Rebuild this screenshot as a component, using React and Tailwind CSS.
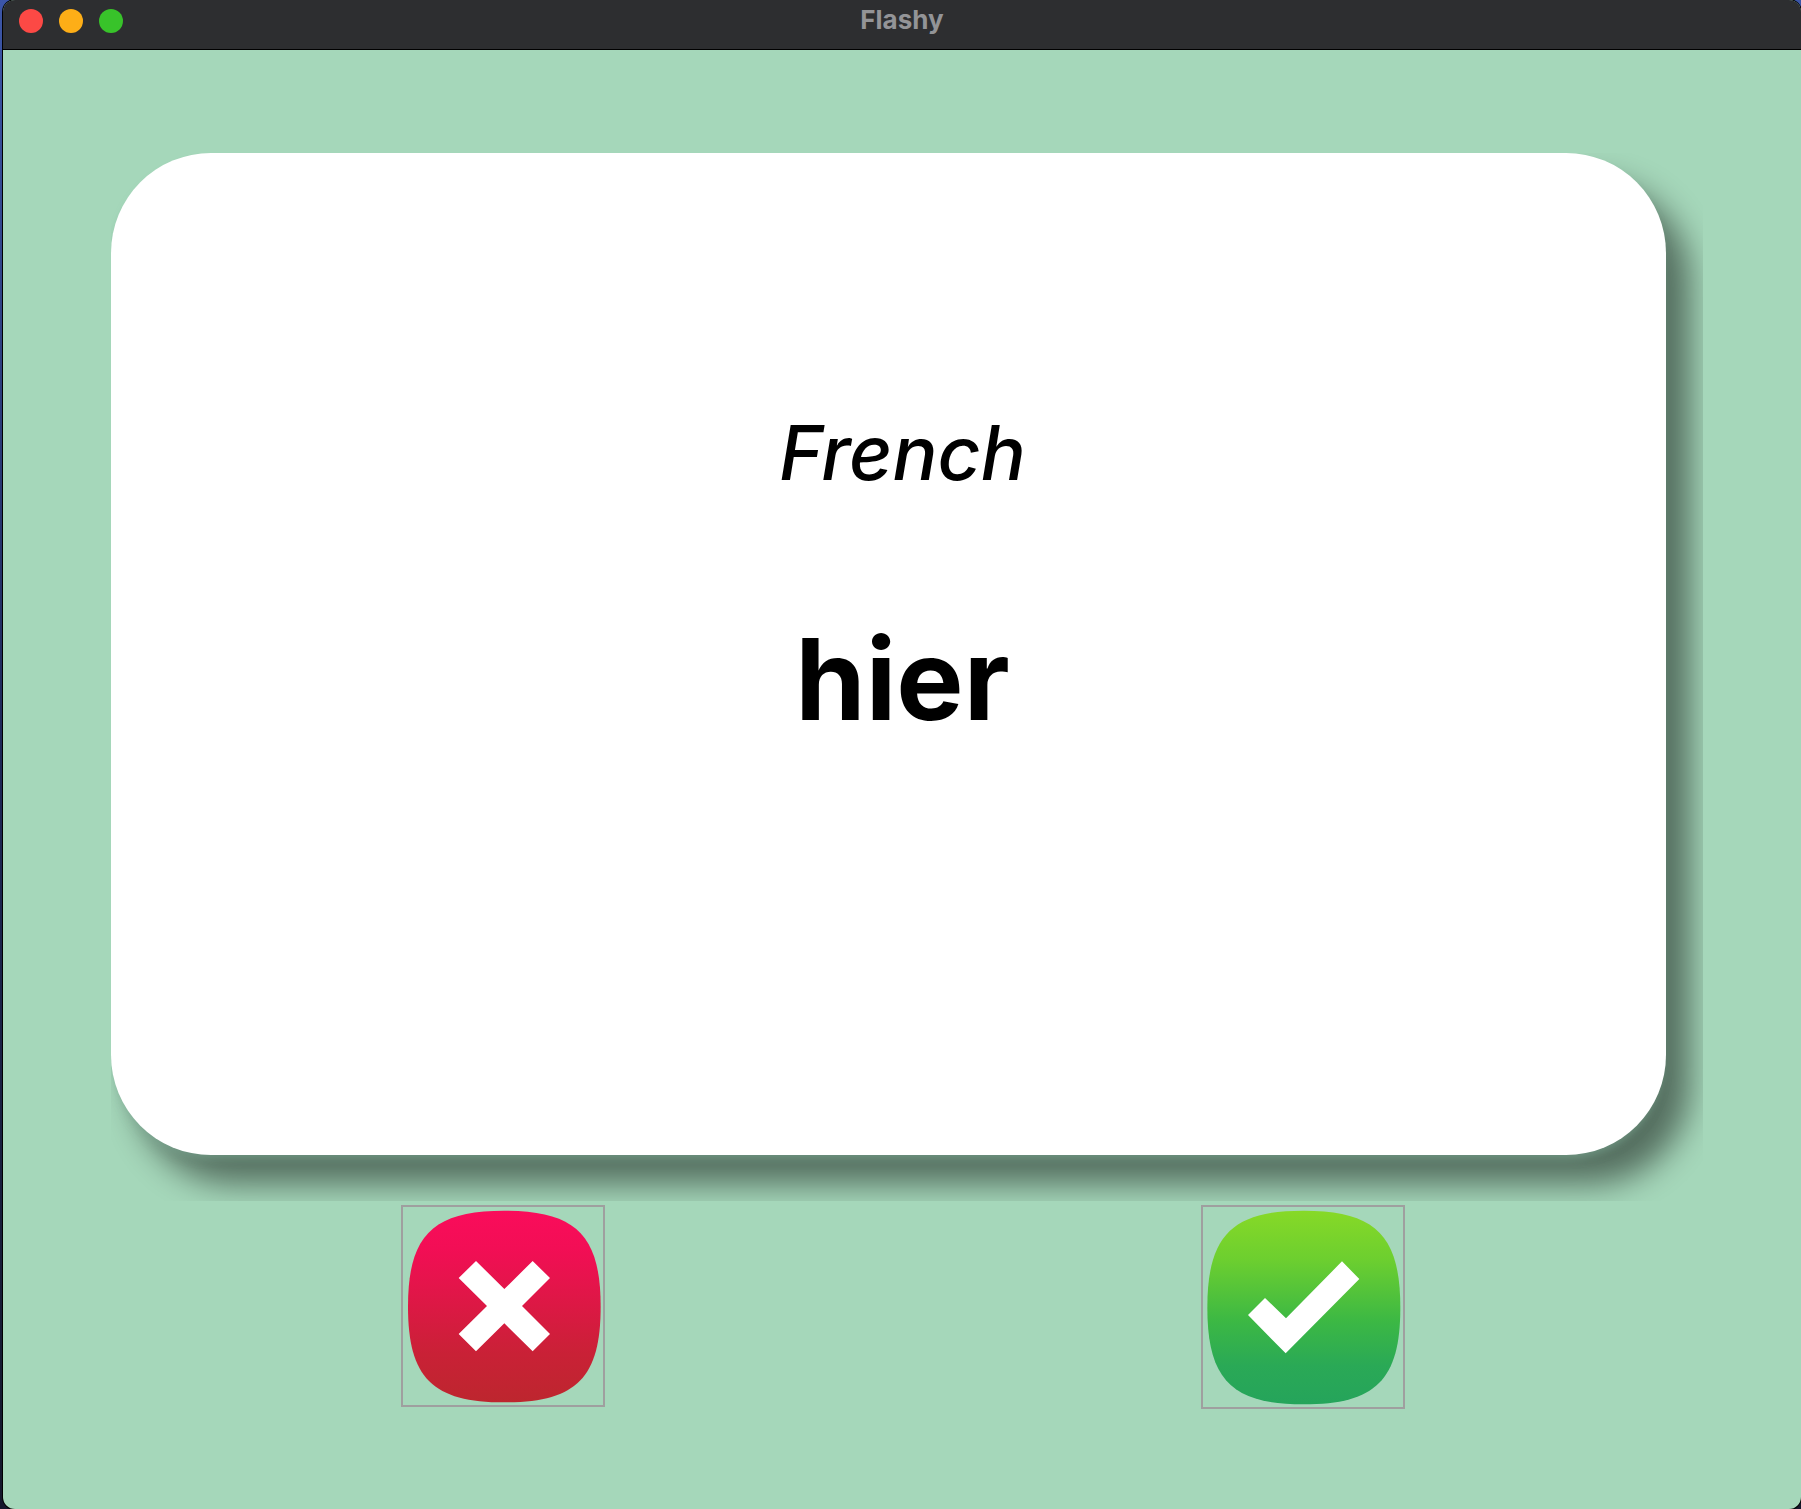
import React from "react";

function TitleBar() {
  return (
    <header className="grid h-[50px] grid-cols-3 items-center border-b border-black bg-[#2d2e30] px-4 pb-2">
      <div className="flex gap-4">
        <button aria-label="Close" className="size-6 rounded-full bg-[#fc4945]" />
        <button aria-label="Minimize" className="size-6 rounded-full bg-[#fdae17]" />
        <button aria-label="Zoom" className="size-6 rounded-full bg-[#38c32a]" />
      </div>
      <h1 className="pb-0.5 text-center text-[26px] leading-8 font-bold text-[#939497]">Flashy</h1>
    </header>
  );
}

function WrongIcon() {
  return (
    <svg viewBox="39 36 600 594" className="h-[198px] w-[200px]" aria-hidden="true">
      <defs>
        <linearGradient id="red" x1="0" y1="0" x2="0" y2="1">
          <stop offset="0" stopColor="#fa0c5b" />
          <stop offset="0.2" stopColor="#f20e55" />
          <stop offset="0.75" stopColor="#c92136" />
          <stop offset="1" stopColor="#bd262e" />
        </linearGradient>
      </defs>
      <path
        d="M343 47C558 47 632 121 632 335C632 549 558 622 343 622C128 622 54 549 54 335C54 121 128 47 343 47Z"
        fill="url(#red)"
      />
      <path
        d="M258 198L343 282L428 198L480 249L396 333L480 417L428 469L343 385L258 469L206 417L291 333L206 249Z"
        fill="#fff"
      />
    </svg>
  );
}

function RightIcon() {
  return (
    <svg viewBox="39 36 600 600" className="size-[200px]" aria-hidden="true">
      <defs>
        <linearGradient id="green" x1="0" y1="0" x2="0" y2="1">
          <stop offset="0" stopColor="#87d927" />
          <stop offset="0.25" stopColor="#6dcf2f" />
          <stop offset="0.57" stopColor="#3cb844" />
          <stop offset="0.8" stopColor="#2aa956" />
          <stop offset="1" stopColor="#25a45b" />
        </linearGradient>
      </defs>
      <path
        d="M341 47C557 47 631 122 631 338C631 554 557 628 341 628C126 628 52 554 52 338C52 122 126 47 341 47Z"
        fill="url(#green)"
      />
      <path d="M225 309L288 370L456 199L508 252L287 475L174 360Z" fill="#fff" />
    </svg>
  );
}

export default function App() {
  return (
    <div className="min-h-screen bg-[#1c2350] bg-linear-to-b from-[#3c56a8] via-[#1e2757] to-[#15172b] pl-[3px] font-['Inter',sans-serif]">
      <div className="flex min-h-screen flex-col overflow-hidden rounded-xl bg-[#a5d7ba] shadow-[0_0_0_1px_#000]">
        <TitleBar />
        <main className="pt-[103px] pr-[98px] pb-[100px] pl-[100px]">
          <div className="ml-2 overflow-hidden pr-[37px] pb-[46px]">
            <section className="flex flex-col items-center rounded-[100px] bg-white pt-[252px] pb-[404px] pl-7 text-black shadow-[0_7px_8px_-3px_rgba(125,170,148,0.6),24px_29px_32px_rgba(0,0,0,0.49)]">
              <p className="text-[75px] leading-[96px] font-medium italic">French</p>
              <p className="mt-[106px] text-[113px] leading-[144px] font-bold">hier</p>
            </section>
          </div>
          <div className="mt-1 grid grid-cols-2 items-start justify-items-center">
            <button aria-label="Unknown" className="border-2 border-[#9f9f9f]">
              <WrongIcon />
            </button>
            <button aria-label="Known" className="border-2 border-[#9f9f9f]">
              <RightIcon />
            </button>
          </div>
        </main>
      </div>
    </div>
  );
}
